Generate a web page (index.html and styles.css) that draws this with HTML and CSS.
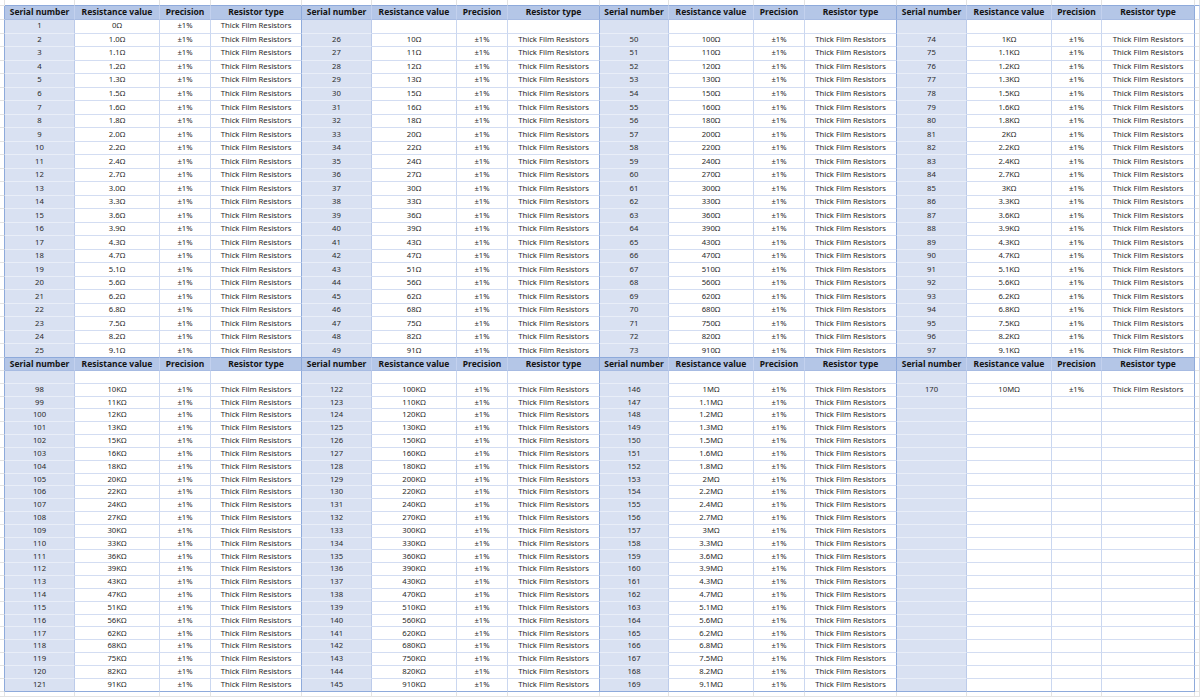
FILE: index.html
```html
<!DOCTYPE html>
<html lang="en">
<head>
<meta charset="utf-8">
<title>Thick Film Resistors</title>
<link rel="stylesheet" href="styles.css">
</head>
<body>
<table class="sheet">
<colgroup>
<col class="cx">
<col class="c1"><col class="c2"><col class="c3"><col class="c4a">
<col class="c1"><col class="c2"><col class="c3"><col class="c4b">
<col class="c1b"><col class="c2"><col class="c3"><col class="c4b">
<col class="c1"><col class="c2"><col class="c3b"><col class="c4c">
<col class="cx">
</colgroup>
<tbody>
<tr class="e top"><td class=x><td><td><td><td><td><td><td><td><td><td><td><td><td><td><td><td><td><td class=x>
<tr class="h h1"><td class="x l"><td class=s>Serial number<td>Resistance value<td>Precision<td class=t>Resistor type<td class=s>Serial number<td>Resistance value<td>Precision<td class=t>Resistor type<td class=s>Serial number<td>Resistance value<td>Precision<td class=t>Resistor type<td class=s>Serial number<td>Resistance value<td>Precision<td class=t>Resistor type<td class=x>
<tr class=r><td class="x l"><td class=s>1<td>0Ω<td>±1%<td class=t>Thick Film Resistors<td class=s><td><td><td class=t><td class=s><td><td><td class=t><td class=s><td><td><td class=t><td class=x>
<tr class=r><td class="x l"><td class=s>2<td>1.0Ω<td>±1%<td class=t>Thick Film Resistors<td class=s>26<td>10Ω<td>±1%<td class=t>Thick Film Resistors<td class=s>50<td>100Ω<td>±1%<td class=t>Thick Film Resistors<td class=s>74<td>1KΩ<td>±1%<td class=t>Thick Film Resistors<td class=x>
<tr class=r><td class="x l"><td class=s>3<td>1.1Ω<td>±1%<td class=t>Thick Film Resistors<td class=s>27<td>11Ω<td>±1%<td class=t>Thick Film Resistors<td class=s>51<td>110Ω<td>±1%<td class=t>Thick Film Resistors<td class=s>75<td>1.1KΩ<td>±1%<td class=t>Thick Film Resistors<td class=x>
<tr class=r><td class="x l"><td class=s>4<td>1.2Ω<td>±1%<td class=t>Thick Film Resistors<td class=s>28<td>12Ω<td>±1%<td class=t>Thick Film Resistors<td class=s>52<td>120Ω<td>±1%<td class=t>Thick Film Resistors<td class=s>76<td>1.2KΩ<td>±1%<td class=t>Thick Film Resistors<td class=x>
<tr class=r><td class="x l"><td class=s>5<td>1.3Ω<td>±1%<td class=t>Thick Film Resistors<td class=s>29<td>13Ω<td>±1%<td class=t>Thick Film Resistors<td class=s>53<td>130Ω<td>±1%<td class=t>Thick Film Resistors<td class=s>77<td>1.3KΩ<td>±1%<td class=t>Thick Film Resistors<td class=x>
<tr class=r><td class="x l"><td class=s>6<td>1.5Ω<td>±1%<td class=t>Thick Film Resistors<td class=s>30<td>15Ω<td>±1%<td class=t>Thick Film Resistors<td class=s>54<td>150Ω<td>±1%<td class=t>Thick Film Resistors<td class=s>78<td>1.5KΩ<td>±1%<td class=t>Thick Film Resistors<td class=x>
<tr class=r><td class="x l"><td class=s>7<td>1.6Ω<td>±1%<td class=t>Thick Film Resistors<td class=s>31<td>16Ω<td>±1%<td class=t>Thick Film Resistors<td class=s>55<td>160Ω<td>±1%<td class=t>Thick Film Resistors<td class=s>79<td>1.6KΩ<td>±1%<td class=t>Thick Film Resistors<td class=x>
<tr class=r><td class="x l"><td class=s>8<td>1.8Ω<td>±1%<td class=t>Thick Film Resistors<td class=s>32<td>18Ω<td>±1%<td class=t>Thick Film Resistors<td class=s>56<td>180Ω<td>±1%<td class=t>Thick Film Resistors<td class=s>80<td>1.8KΩ<td>±1%<td class=t>Thick Film Resistors<td class=x>
<tr class=r><td class="x l"><td class=s>9<td>2.0Ω<td>±1%<td class=t>Thick Film Resistors<td class=s>33<td>20Ω<td>±1%<td class=t>Thick Film Resistors<td class=s>57<td>200Ω<td>±1%<td class=t>Thick Film Resistors<td class=s>81<td>2KΩ<td>±1%<td class=t>Thick Film Resistors<td class=x>
<tr class=r><td class="x l"><td class=s>10<td>2.2Ω<td>±1%<td class=t>Thick Film Resistors<td class=s>34<td>22Ω<td>±1%<td class=t>Thick Film Resistors<td class=s>58<td>220Ω<td>±1%<td class=t>Thick Film Resistors<td class=s>82<td>2.2KΩ<td>±1%<td class=t>Thick Film Resistors<td class=x>
<tr class=r><td class="x l"><td class=s>11<td>2.4Ω<td>±1%<td class=t>Thick Film Resistors<td class=s>35<td>24Ω<td>±1%<td class=t>Thick Film Resistors<td class=s>59<td>240Ω<td>±1%<td class=t>Thick Film Resistors<td class=s>83<td>2.4KΩ<td>±1%<td class=t>Thick Film Resistors<td class=x>
<tr class=r><td class="x l"><td class=s>12<td>2.7Ω<td>±1%<td class=t>Thick Film Resistors<td class=s>36<td>27Ω<td>±1%<td class=t>Thick Film Resistors<td class=s>60<td>270Ω<td>±1%<td class=t>Thick Film Resistors<td class=s>84<td>2.7KΩ<td>±1%<td class=t>Thick Film Resistors<td class=x>
<tr class=r><td class="x l"><td class=s>13<td>3.0Ω<td>±1%<td class=t>Thick Film Resistors<td class=s>37<td>30Ω<td>±1%<td class=t>Thick Film Resistors<td class=s>61<td>300Ω<td>±1%<td class=t>Thick Film Resistors<td class=s>85<td>3KΩ<td>±1%<td class=t>Thick Film Resistors<td class=x>
<tr class=r><td class="x l"><td class=s>14<td>3.3Ω<td>±1%<td class=t>Thick Film Resistors<td class=s>38<td>33Ω<td>±1%<td class=t>Thick Film Resistors<td class=s>62<td>330Ω<td>±1%<td class=t>Thick Film Resistors<td class=s>86<td>3.3KΩ<td>±1%<td class=t>Thick Film Resistors<td class=x>
<tr class=r><td class="x l"><td class=s>15<td>3.6Ω<td>±1%<td class=t>Thick Film Resistors<td class=s>39<td>36Ω<td>±1%<td class=t>Thick Film Resistors<td class=s>63<td>360Ω<td>±1%<td class=t>Thick Film Resistors<td class=s>87<td>3.6KΩ<td>±1%<td class=t>Thick Film Resistors<td class=x>
<tr class=r><td class="x l"><td class=s>16<td>3.9Ω<td>±1%<td class=t>Thick Film Resistors<td class=s>40<td>39Ω<td>±1%<td class=t>Thick Film Resistors<td class=s>64<td>390Ω<td>±1%<td class=t>Thick Film Resistors<td class=s>88<td>3.9KΩ<td>±1%<td class=t>Thick Film Resistors<td class=x>
<tr class=r><td class="x l"><td class=s>17<td>4.3Ω<td>±1%<td class=t>Thick Film Resistors<td class=s>41<td>43Ω<td>±1%<td class=t>Thick Film Resistors<td class=s>65<td>430Ω<td>±1%<td class=t>Thick Film Resistors<td class=s>89<td>4.3KΩ<td>±1%<td class=t>Thick Film Resistors<td class=x>
<tr class=r><td class="x l"><td class=s>18<td>4.7Ω<td>±1%<td class=t>Thick Film Resistors<td class=s>42<td>47Ω<td>±1%<td class=t>Thick Film Resistors<td class=s>66<td>470Ω<td>±1%<td class=t>Thick Film Resistors<td class=s>90<td>4.7KΩ<td>±1%<td class=t>Thick Film Resistors<td class=x>
<tr class=r><td class="x l"><td class=s>19<td>5.1Ω<td>±1%<td class=t>Thick Film Resistors<td class=s>43<td>51Ω<td>±1%<td class=t>Thick Film Resistors<td class=s>67<td>510Ω<td>±1%<td class=t>Thick Film Resistors<td class=s>91<td>5.1KΩ<td>±1%<td class=t>Thick Film Resistors<td class=x>
<tr class=r><td class="x l"><td class=s>20<td>5.6Ω<td>±1%<td class=t>Thick Film Resistors<td class=s>44<td>56Ω<td>±1%<td class=t>Thick Film Resistors<td class=s>68<td>560Ω<td>±1%<td class=t>Thick Film Resistors<td class=s>92<td>5.6KΩ<td>±1%<td class=t>Thick Film Resistors<td class=x>
<tr class=r><td class="x l"><td class=s>21<td>6.2Ω<td>±1%<td class=t>Thick Film Resistors<td class=s>45<td>62Ω<td>±1%<td class=t>Thick Film Resistors<td class=s>69<td>620Ω<td>±1%<td class=t>Thick Film Resistors<td class=s>93<td>6.2KΩ<td>±1%<td class=t>Thick Film Resistors<td class=x>
<tr class=r><td class="x l"><td class=s>22<td>6.8Ω<td>±1%<td class=t>Thick Film Resistors<td class=s>46<td>68Ω<td>±1%<td class=t>Thick Film Resistors<td class=s>70<td>680Ω<td>±1%<td class=t>Thick Film Resistors<td class=s>94<td>6.8KΩ<td>±1%<td class=t>Thick Film Resistors<td class=x>
<tr class=r><td class="x l"><td class=s>23<td>7.5Ω<td>±1%<td class=t>Thick Film Resistors<td class=s>47<td>75Ω<td>±1%<td class=t>Thick Film Resistors<td class=s>71<td>750Ω<td>±1%<td class=t>Thick Film Resistors<td class=s>95<td>7.5KΩ<td>±1%<td class=t>Thick Film Resistors<td class=x>
<tr class=r><td class="x l"><td class=s>24<td>8.2Ω<td>±1%<td class=t>Thick Film Resistors<td class=s>48<td>82Ω<td>±1%<td class=t>Thick Film Resistors<td class=s>72<td>820Ω<td>±1%<td class=t>Thick Film Resistors<td class=s>96<td>8.2KΩ<td>±1%<td class=t>Thick Film Resistors<td class=x>
<tr class="r end"><td class="x l"><td class=s>25<td>9.1Ω<td>±1%<td class=t>Thick Film Resistors<td class=s>49<td>91Ω<td>±1%<td class=t>Thick Film Resistors<td class=s>73<td>910Ω<td>±1%<td class=t>Thick Film Resistors<td class=s>97<td>9.1KΩ<td>±1%<td class=t>Thick Film Resistors<td class=x>
<tr class="h h2"><td class="x l"><td class=s>Serial number<td>Resistance value<td>Precision<td class=t>Resistor type<td class=s>Serial number<td>Resistance value<td>Precision<td class=t>Resistor type<td class=s>Serial number<td>Resistance value<td>Precision<td class=t>Resistor type<td class=s>Serial number<td>Resistance value<td>Precision<td class=t>Resistor type<td class=x>
<tr class=q><td class="x l"><td class=s><td><td><td class=t><td class=s><td><td><td class=t><td class=s><td><td><td class=t><td class=s><td><td><td class=t><td class=x>
<tr class=q><td class="x l"><td class=s>98<td>10KΩ<td>±1%<td class=t>Thick Film Resistors<td class=s>122<td>100KΩ<td>±1%<td class=t>Thick Film Resistors<td class=s>146<td>1MΩ<td>±1%<td class=t>Thick Film Resistors<td class=s>170<td>10MΩ<td>±1%<td class=t>Thick Film Resistors<td class=x>
<tr class=q><td class="x l"><td class=s>99<td>11KΩ<td>±1%<td class=t>Thick Film Resistors<td class=s>123<td>110KΩ<td>±1%<td class=t>Thick Film Resistors<td class=s>147<td>1.1MΩ<td>±1%<td class=t>Thick Film Resistors<td class=s><td><td><td class=t><td class=x>
<tr class=q><td class="x l"><td class=s>100<td>12KΩ<td>±1%<td class=t>Thick Film Resistors<td class=s>124<td>120KΩ<td>±1%<td class=t>Thick Film Resistors<td class=s>148<td>1.2MΩ<td>±1%<td class=t>Thick Film Resistors<td class=s><td><td><td class=t><td class=x>
<tr class=q><td class="x l"><td class=s>101<td>13KΩ<td>±1%<td class=t>Thick Film Resistors<td class=s>125<td>130KΩ<td>±1%<td class=t>Thick Film Resistors<td class=s>149<td>1.3MΩ<td>±1%<td class=t>Thick Film Resistors<td class=s><td><td><td class=t><td class=x>
<tr class=q><td class="x l"><td class=s>102<td>15KΩ<td>±1%<td class=t>Thick Film Resistors<td class=s>126<td>150KΩ<td>±1%<td class=t>Thick Film Resistors<td class=s>150<td>1.5MΩ<td>±1%<td class=t>Thick Film Resistors<td class=s><td><td><td class=t><td class=x>
<tr class=q><td class="x l"><td class=s>103<td>16KΩ<td>±1%<td class=t>Thick Film Resistors<td class=s>127<td>160KΩ<td>±1%<td class=t>Thick Film Resistors<td class=s>151<td>1.6MΩ<td>±1%<td class=t>Thick Film Resistors<td class=s><td><td><td class=t><td class=x>
<tr class=q><td class="x l"><td class=s>104<td>18KΩ<td>±1%<td class=t>Thick Film Resistors<td class=s>128<td>180KΩ<td>±1%<td class=t>Thick Film Resistors<td class=s>152<td>1.8MΩ<td>±1%<td class=t>Thick Film Resistors<td class=s><td><td><td class=t><td class=x>
<tr class=q><td class="x l"><td class=s>105<td>20KΩ<td>±1%<td class=t>Thick Film Resistors<td class=s>129<td>200KΩ<td>±1%<td class=t>Thick Film Resistors<td class=s>153<td>2MΩ<td>±1%<td class=t>Thick Film Resistors<td class=s><td><td><td class=t><td class=x>
<tr class=q><td class="x l"><td class=s>106<td>22KΩ<td>±1%<td class=t>Thick Film Resistors<td class=s>130<td>220KΩ<td>±1%<td class=t>Thick Film Resistors<td class=s>154<td>2.2MΩ<td>±1%<td class=t>Thick Film Resistors<td class=s><td><td><td class=t><td class=x>
<tr class=q><td class="x l"><td class=s>107<td>24KΩ<td>±1%<td class=t>Thick Film Resistors<td class=s>131<td>240KΩ<td>±1%<td class=t>Thick Film Resistors<td class=s>155<td>2.4MΩ<td>±1%<td class=t>Thick Film Resistors<td class=s><td><td><td class=t><td class=x>
<tr class=q><td class="x l"><td class=s>108<td>27KΩ<td>±1%<td class=t>Thick Film Resistors<td class=s>132<td>270KΩ<td>±1%<td class=t>Thick Film Resistors<td class=s>156<td>2.7MΩ<td>±1%<td class=t>Thick Film Resistors<td class=s><td><td><td class=t><td class=x>
<tr class=q><td class="x l"><td class=s>109<td>30KΩ<td>±1%<td class=t>Thick Film Resistors<td class=s>133<td>300KΩ<td>±1%<td class=t>Thick Film Resistors<td class=s>157<td>3MΩ<td>±1%<td class=t>Thick Film Resistors<td class=s><td><td><td class=t><td class=x>
<tr class=q><td class="x l"><td class=s>110<td>33KΩ<td>±1%<td class=t>Thick Film Resistors<td class=s>134<td>330KΩ<td>±1%<td class=t>Thick Film Resistors<td class=s>158<td>3.3MΩ<td>±1%<td class=t>Thick Film Resistors<td class=s><td><td><td class=t><td class=x>
<tr class=q><td class="x l"><td class=s>111<td>36KΩ<td>±1%<td class=t>Thick Film Resistors<td class=s>135<td>360KΩ<td>±1%<td class=t>Thick Film Resistors<td class=s>159<td>3.6MΩ<td>±1%<td class=t>Thick Film Resistors<td class=s><td><td><td class=t><td class=x>
<tr class=q><td class="x l"><td class=s>112<td>39KΩ<td>±1%<td class=t>Thick Film Resistors<td class=s>136<td>390KΩ<td>±1%<td class=t>Thick Film Resistors<td class=s>160<td>3.9MΩ<td>±1%<td class=t>Thick Film Resistors<td class=s><td><td><td class=t><td class=x>
<tr class=q><td class="x l"><td class=s>113<td>43KΩ<td>±1%<td class=t>Thick Film Resistors<td class=s>137<td>430KΩ<td>±1%<td class=t>Thick Film Resistors<td class=s>161<td>4.3MΩ<td>±1%<td class=t>Thick Film Resistors<td class=s><td><td><td class=t><td class=x>
<tr class=q><td class="x l"><td class=s>114<td>47KΩ<td>±1%<td class=t>Thick Film Resistors<td class=s>138<td>470KΩ<td>±1%<td class=t>Thick Film Resistors<td class=s>162<td>4.7MΩ<td>±1%<td class=t>Thick Film Resistors<td class=s><td><td><td class=t><td class=x>
<tr class=q><td class="x l"><td class=s>115<td>51KΩ<td>±1%<td class=t>Thick Film Resistors<td class=s>139<td>510KΩ<td>±1%<td class=t>Thick Film Resistors<td class=s>163<td>5.1MΩ<td>±1%<td class=t>Thick Film Resistors<td class=s><td><td><td class=t><td class=x>
<tr class=q><td class="x l"><td class=s>116<td>56KΩ<td>±1%<td class=t>Thick Film Resistors<td class=s>140<td>560KΩ<td>±1%<td class=t>Thick Film Resistors<td class=s>164<td>5.6MΩ<td>±1%<td class=t>Thick Film Resistors<td class=s><td><td><td class=t><td class=x>
<tr class=q><td class="x l"><td class=s>117<td>62KΩ<td>±1%<td class=t>Thick Film Resistors<td class=s>141<td>620KΩ<td>±1%<td class=t>Thick Film Resistors<td class=s>165<td>6.2MΩ<td>±1%<td class=t>Thick Film Resistors<td class=s><td><td><td class=t><td class=x>
<tr class=q><td class="x l"><td class=s>118<td>68KΩ<td>±1%<td class=t>Thick Film Resistors<td class=s>142<td>680KΩ<td>±1%<td class=t>Thick Film Resistors<td class=s>166<td>6.8MΩ<td>±1%<td class=t>Thick Film Resistors<td class=s><td><td><td class=t><td class=x>
<tr class=q><td class="x l"><td class=s>119<td>75KΩ<td>±1%<td class=t>Thick Film Resistors<td class=s>143<td>750KΩ<td>±1%<td class=t>Thick Film Resistors<td class=s>167<td>7.5MΩ<td>±1%<td class=t>Thick Film Resistors<td class=s><td><td><td class=t><td class=x>
<tr class=q><td class="x l"><td class=s>120<td>82KΩ<td>±1%<td class=t>Thick Film Resistors<td class=s>144<td>820KΩ<td>±1%<td class=t>Thick Film Resistors<td class=s>168<td>8.2MΩ<td>±1%<td class=t>Thick Film Resistors<td class=s><td><td><td class=t><td class=x>
<tr class="q end"><td class="x l"><td class=s>121<td>91KΩ<td>±1%<td class=t>Thick Film Resistors<td class=s>145<td>910KΩ<td>±1%<td class=t>Thick Film Resistors<td class=s>169<td>9.1MΩ<td>±1%<td class=t>Thick Film Resistors<td class=s><td><td><td class=t><td class=x>
<tr class="e bot"><td class=x><td><td><td><td><td><td><td><td><td><td><td><td><td><td><td><td><td><td class=x>
</tbody>
</table>
</body>
</html>
```

FILE: styles.css
```css
html, body {
  margin: 0;
  padding: 0;
  background: #ffffff;
}

.sheet {
  border-collapse: separate;
  border-spacing: 0;
  table-layout: fixed;
  width: 1200px;
  font-family: "Noto Sans", "Open Sans", sans-serif;
  font-size: 7.7px;
  color: #2a2a2a;
}

.cx { width: 5px; }
.c1 { width: 70px; }
.c1b { width: 69px; }
.c2 { width: 85px; }
.c3 { width: 51px; }
.c3b { width: 50px; }
.c4a { width: 91px; }
.c4b { width: 92px; }
.c4c { width: 93px; }

.sheet td {
  box-sizing: border-box;
  padding: 0;
  border-right: 1px solid #cad7f0;
  border-bottom: 1px solid #d3ddf2;
  text-align: center;
  vertical-align: middle;
  white-space: nowrap;
  line-height: 1;
  background: #ffffff;
}

.sheet td.s {
  background: #d9e1f2;
  border-right-color: #bccbea;
  border-bottom-color: #e9eef8;
}

.sheet td.t {
  border-right-color: #8eaadb;
}

.sheet td.x {
  background: #ffffff;
  border-right-color: #e3e3e3;
  border-bottom-color: #e3e3e3;
}

.sheet td.x.l {
  border-right-color: #8eaadb;
}

.sheet tr.h td {
  background: #b4c6e7;
  font-weight: 700;
  color: #141414;
  font-size: 8.5px;
  border-right-color: #c3d1ee;
  border-bottom-color: #a7bbe2;
}

.sheet tr.h td.t {
  border-right-color: #8eaadb;
}

.sheet tr.end td {
  border-bottom-color: #8eaadb;
}

.sheet tr.h td.x,
.sheet tr.end td.x {
  background: #ffffff;
  border-bottom-color: #e3e3e3;
}

.sheet tr.h td.x.l {
  border-right-color: #8eaadb;
}

.sheet tr.e td {
  background: #ffffff;
  border-right: 1px solid #e3e3e3;
  border-bottom: 1px solid #e3e3e3;
}

.sheet tr.e.top td {
  border-bottom-color: #8eaadb;
}

.sheet tr.e.top td.x {
  border-bottom-color: #e3e3e3;
}

.sheet tr.e.top td { height: 6px; }
.sheet tr.h1 td { height: 14px; }
.sheet tr.r td { height: 13.52px; }
.sheet tr.h2 td { height: 13px; }
.sheet tr.q td { height: 12.84px; }
.sheet tr.e.bot td { height: 5px; }
```
